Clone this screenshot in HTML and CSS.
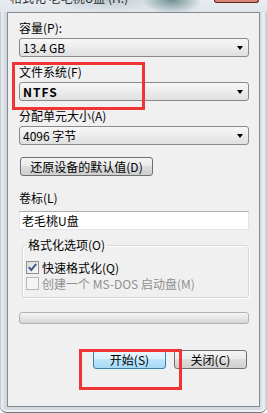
FILE: index.html
```html
<!DOCTYPE html>
<html lang="zh-CN">
<head>
    <meta charset="UTF-8">
    <meta name="viewport" content="width=device-width, initial-scale=1.0">
    <title>格式化 老毛桃U盘</title>
    <link rel="stylesheet" href="styles.css">
</head>
<body>
    <div class="window">
        <div class="titlebar">
            <span class="title">格式化 老毛桃U盘 (H:)</span>
            <span class="close-btn"></span>
        </div>

        <div class="client">
            <div class="field">
                <div class="label">容量(P):</div>
                <div class="combo"><span>13.4 GB</span><i class="arrow"></i></div>
            </div>
            <div class="field">
                <div class="label">文件系统(F)</div>
                <div class="combo"><span class="strong">NTFS</span><i class="arrow"></i></div>
            </div>
            <div class="field">
                <div class="label">分配单元大小(A)</div>
                <div class="combo"><span>4096 字节</span><i class="arrow"></i></div>
            </div>

            <button class="btn btn-restore">还原设备的默认值(D)</button>

            <div class="label label-volume">卷标(L)</div>
            <div class="textbox">老毛桃U盘</div>

            <fieldset class="group">
                <legend>格式化选项(O)</legend>
                <div class="checks">
                    <div class="check">
                        <span class="box">
                            <svg width="11" height="11" viewBox="0 0 11 11">
                                <path d="M1.8 5.2 L4.3 8 L9.2 1.8" fill="none" stroke="#3b5689" stroke-width="1.9"/>
                            </svg>
                        </span>
                        快速格式化(Q)
                    </div>
                    <div class="check disabled">
                        <span class="box"></span>
                        创建一个 MS-DOS 启动盘(M)
                    </div>
                </div>
            </fieldset>

            <div class="progress"></div>

            <div class="actions">
                <button class="btn btn-default">开始(S)</button>
                <button class="btn">关闭(C)</button>
            </div>
        </div>

        <!-- red highlight marks drawn over the dialog -->
        <div class="mark mark-fs"></div>
        <div class="mark mark-start"></div>
    </div>
</body>
</html>
```

FILE: styles.css
```css
body {
    margin: 0;
    font-family: "Noto Sans CJK SC", sans-serif;
    font-size: 12px;
    color: #000;
}

.window {
    position: relative;
    width: 267px;
    height: 413px;
    box-sizing: border-box;
    padding: 0 7px 6px;
    display: flex;
    flex-direction: column;
    overflow: hidden;
    border-radius: 0 0 7px 7px;
    background: linear-gradient(to right, #b9c2ca 0, #eef1f4 2px, #d3d9df 5px, #d3d9df 260px, #eef1f4 264px, #b9c2ca 267px);
    box-shadow: inset 0 -1px 0 #6d7780, inset 0 -3px 0 #eef1f4;
}

.titlebar {
    height: 12px;
    margin: 0 -7px;
    padding: 0 8px 0 10px;
    display: flex;
    justify-content: space-between;
    overflow: hidden;
    background:
        radial-gradient(ellipse 30px 14px at 172px 0, rgba(70, 110, 110, 0.75), rgba(70, 110, 110, 0)),
        radial-gradient(ellipse 60px 12px at 110px 0, rgba(150, 170, 180, 0.5), rgba(150, 170, 180, 0)),
        linear-gradient(#e9edf1, #dfe5ea);
}

.title {
    line-height: 14px;
    margin-top: -9px;
    color: #2a2a2a;
    white-space: nowrap;
}

.close-btn {
    width: 43px;
    height: 2px;
    background: #d9877c;
    border: 1px solid #5e2219;
    border-top: 0;
    border-radius: 0 0 4px 4px;
}

.client {
    flex: 1;
    background: #f0f0f0;
    border: 1px solid #7f8a95;
    padding: 8px 10px 0 11px;
}

.field {
    margin-bottom: 8px;
}

.label {
    line-height: 14px;
    margin-bottom: 3px;
}

.combo {
    height: 19px;
    box-sizing: border-box;
    border: 1px solid #8a8a8a;
    border-radius: 3px;
    background: linear-gradient(#f7f7f7, #ececec 50%, #e0e0e0);
    display: flex;
    align-items: center;
    justify-content: space-between;
    padding: 0 5px 0 3px;
    line-height: 17px;
}

.strong {
    font-weight: bold;
    letter-spacing: 1px;
}

.arrow {
    width: 0;
    height: 0;
    border-left: 3px solid transparent;
    border-right: 3px solid transparent;
    border-top: 4px solid #000;
}

.btn {
    display: block;
    height: 19px;
    box-sizing: border-box;
    border: 1px solid #707070;
    border-radius: 3px;
    background: linear-gradient(#f4f4f4, #ebebeb 45%, #dddddd 50%, #cfcfcf);
    font-family: inherit;
    font-size: 12px;
    line-height: 17px;
    color: #000;
    padding: 0;
}

.btn-restore {
    margin: 12px 0 0 1px;
    width: 133px;
}

.label-volume {
    margin: 15px 0 6px;
}

.textbox {
    height: 19px;
    box-sizing: border-box;
    background: #fff;
    border: 1px solid #e2e3ea;
    border-top-color: #abadb3;
    padding-left: 2px;
    line-height: 17px;
}

.group {
    margin: 8px 0 0 3px;
    padding: 0 0 6px 3px;
    border: 1px solid #d5d9dc;
    border-radius: 3px;
    box-shadow: inset 1px 1px 0 #fff, 1px 1px 0 #fff;
}

.group legend {
    padding: 0 2px;
    line-height: 14px;
}

.checks {
    padding-top: 7px;
}

.check {
    display: flex;
    align-items: center;
    gap: 3px;
    height: 16px;
}

.box {
    width: 13px;
    height: 13px;
    box-sizing: border-box;
    border: 1px solid #8e8f8f;
    background: linear-gradient(135deg, #dadada, #fbfbfb);
    display: flex;
    align-items: center;
    justify-content: center;
}

.check.disabled {
    color: #8f8f8f;
}

.check.disabled .box {
    border-color: #b8b8b8;
    background: #f4f4f4;
}

.progress {
    margin-top: 14px;
    height: 12px;
    box-sizing: border-box;
    border: 1px solid #b2b2b2;
    border-radius: 3px;
    background: linear-gradient(#f6f6f6, #e6e6e6 50%, #d6d6d6);
}

.actions {
    margin-top: 26px;
    padding-right: 2px;
    display: flex;
    justify-content: flex-end;
    gap: 8px;
}

.actions .btn {
    width: 73px;
}

.btn-default {
    border-color: #3c7fb1;
    background: linear-gradient(#eaf6fd, #d9f0fc 45%, #bee6fd 50%, #a7d9f5);
}

.mark {
    position: absolute;
    border: 3px solid #f03434;
    box-sizing: border-box;
}

.mark-fs {
    left: 12px;
    top: 62px;
    width: 133px;
    height: 48px;
}

.mark-start {
    left: 79px;
    top: 349px;
    width: 103px;
    height: 41px;
}
```
